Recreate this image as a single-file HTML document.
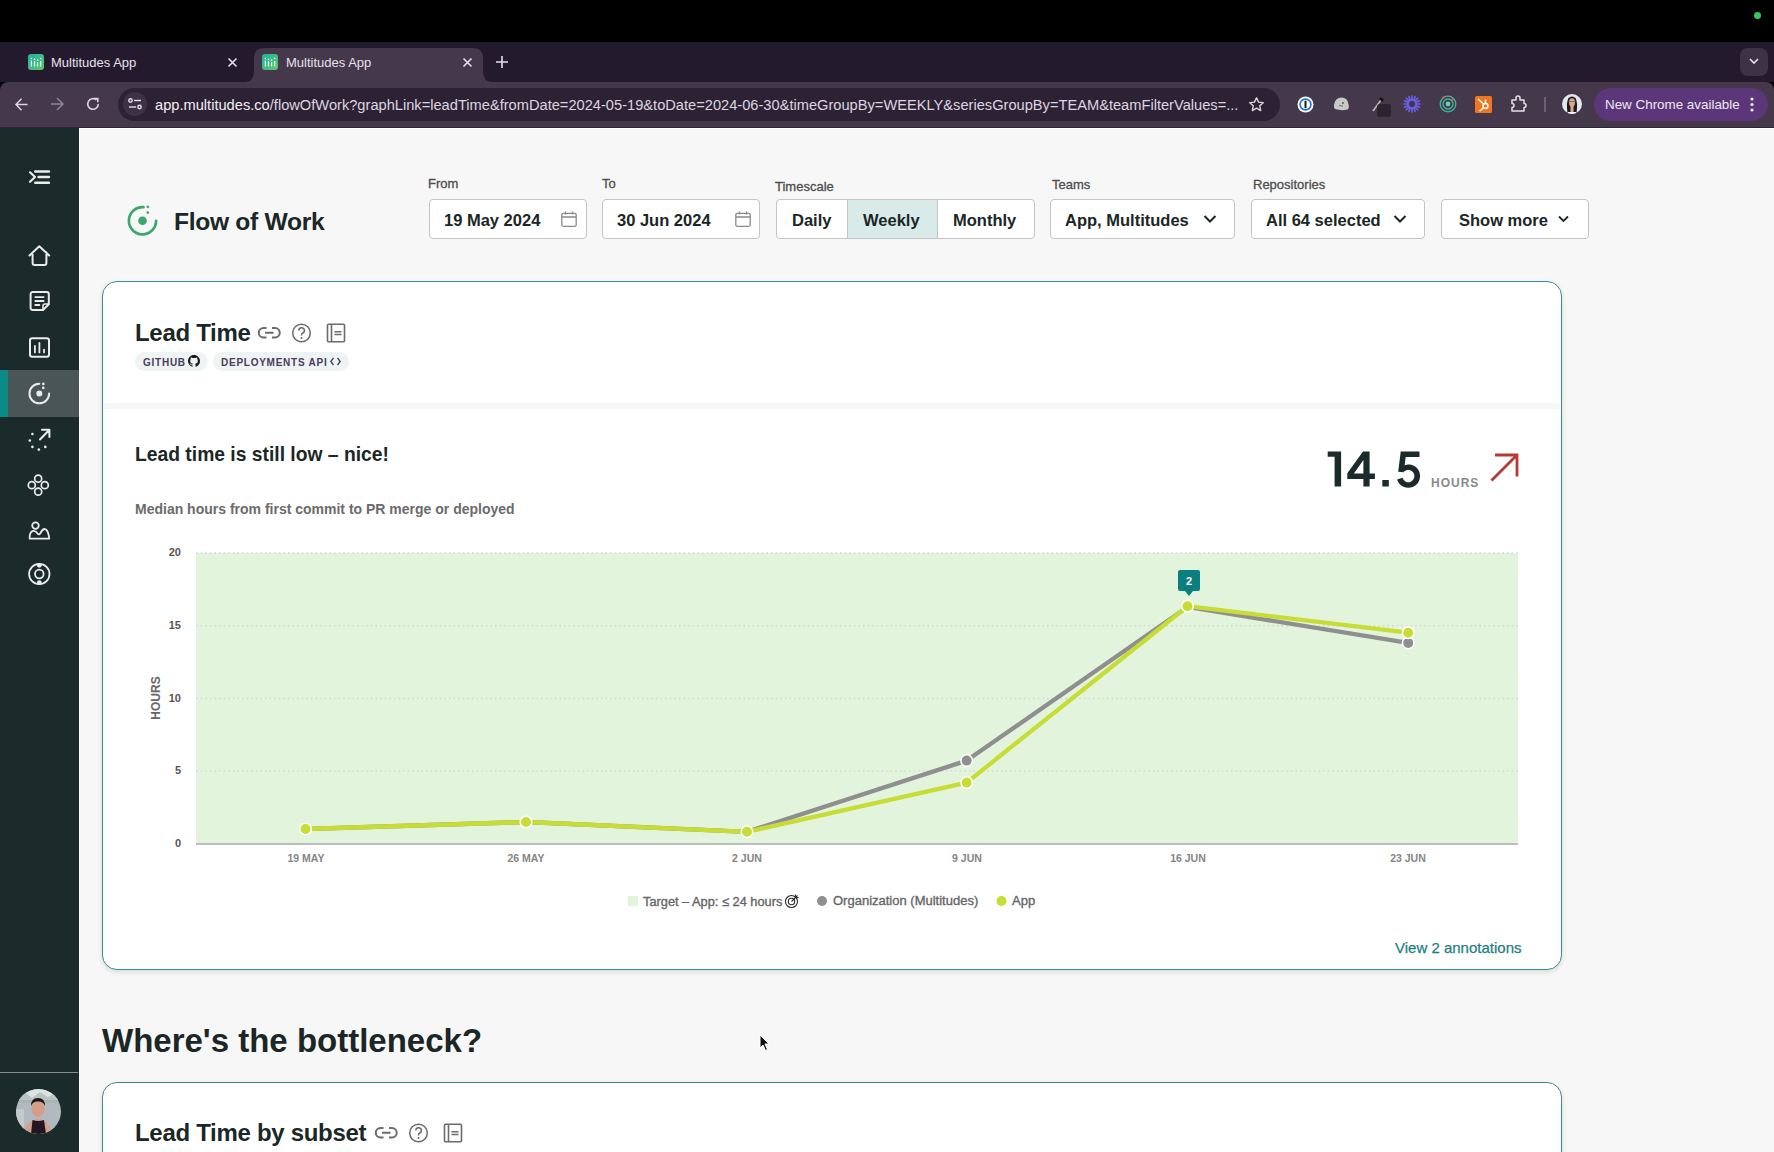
<!DOCTYPE html>
<html><head><meta charset="utf-8">
<style>
*{margin:0;padding:0;box-sizing:border-box}
html,body{width:1774px;height:1152px;overflow:hidden;background:#000;font-family:"Liberation Sans",sans-serif;position:relative}
.a{position:absolute;white-space:nowrap}
svg{position:absolute;overflow:visible}
.tabt{font-size:13px;color:#e8e0ea;top:55px}
.lbl{font-size:13px;color:#4d4d4d;-webkit-text-stroke:0.3px #4d4d4d}
.box{position:absolute;top:199px;height:40px;background:#fff;border:1px solid #c4c4c4;border-radius:4px}
.bt{font-size:16.5px;font-weight:bold;color:#1b2626;top:211px}
.pill{position:absolute;top:352px;height:19px;border-radius:10px;background:#eef3f3}
.pt{font-size:10px;font-weight:bold;letter-spacing:0.75px;color:#4a3a5e;top:357px}
.ylab{font-size:11px;font-weight:bold;color:#555;text-align:right;width:30px;left:151px}
.xlab{font-size:10.5px;font-weight:bold;color:#858585;text-align:center;width:80px;top:852px}
.leg{font-size:13px;color:#666;top:893px;-webkit-text-stroke:0.35px #666}
</style></head><body>
<!-- top black bar dot -->
<div class="a" style="left:1754px;top:12px;width:7px;height:7px;border-radius:50%;background:#34c759"></div>
<!-- tab strip -->
<div class="a" style="left:0;top:42px;width:1774px;height:40px;background:#231b2d"></div>
<!-- active tab -->
<svg style="left:244px;top:48px" width="250" height="34" viewBox="0 0 250 34">
  <path d="M0 34 Q10 34 10 24 L10 10 Q10 0 20 0 L229 0 Q239 0 239 10 L239 24 Q239 34 249 34 Z" fill="#44384a"/>
</svg>
<!-- toolbar -->
<div class="a" style="left:0;top:82px;width:1774px;height:46px;background:#44384a;border-radius:8px 8px 0 0"></div>
<!-- favicons -->
<svg style="left:28px;top:54px" width="16" height="16" viewBox="0 0 16 16"><defs><linearGradient id="fg" x1="0" y1="0" x2="1" y2="1"><stop offset="0" stop-color="#20b39e"/><stop offset="1" stop-color="#62c46c"/></linearGradient></defs><rect width="16" height="16" rx="3" fill="url(#fg)"/><g stroke="#eafff6" stroke-width="1.2"><path d="M3.4 6.6V12.6M6.5 7.3V12.6M9.6 8V12.6M12.7 7V12.6"/></g><g fill="#eafff6"><circle cx="3.4" cy="4.6" r="0.75"/><circle cx="6.5" cy="5.3" r="0.75"/><circle cx="9.6" cy="6" r="0.75"/><circle cx="12.7" cy="4.6" r="0.75"/></g></svg>
<svg style="left:262px;top:54px" width="16" height="16" viewBox="0 0 16 16"><defs><linearGradient id="fg" x1="0" y1="0" x2="1" y2="1"><stop offset="0" stop-color="#20b39e"/><stop offset="1" stop-color="#62c46c"/></linearGradient></defs><rect width="16" height="16" rx="3" fill="url(#fg)"/><g stroke="#eafff6" stroke-width="1.2"><path d="M3.4 6.6V12.6M6.5 7.3V12.6M9.6 8V12.6M12.7 7V12.6"/></g><g fill="#eafff6"><circle cx="3.4" cy="4.6" r="0.75"/><circle cx="6.5" cy="5.3" r="0.75"/><circle cx="9.6" cy="6" r="0.75"/><circle cx="12.7" cy="4.6" r="0.75"/></g></svg>
<div class="a tabt" style="left:51px">Multitudes App</div>
<div class="a tabt" style="left:286px">Multitudes App</div>
<svg style="left:228px;top:58px" width="9" height="9" viewBox="0 0 9 9"><path d="M0.5 0.5L8.5 8.5M8.5 0.5L0.5 8.5" stroke="#e8e0ea" stroke-width="1.6"/></svg>
<svg style="left:463px;top:58px" width="9" height="9" viewBox="0 0 9 9"><path d="M0.5 0.5L8.5 8.5M8.5 0.5L0.5 8.5" stroke="#e8e0ea" stroke-width="1.6"/></svg>
<svg style="left:496px;top:56px" width="12" height="12" viewBox="0 0 12 12"><path d="M6 0V12M0 6H12" stroke="#e8e0ea" stroke-width="1.6"/></svg>
<!-- tab dropdown -->
<div class="a" style="left:1740px;top:48px;width:28px;height:28px;border-radius:8px;background:#3e3246"></div>
<svg style="left:1749px;top:58px" width="10" height="7" viewBox="0 0 10 7"><path d="M1 1L5 5L9 1" stroke="#e8e0ea" stroke-width="1.6" fill="none"/></svg>
<!-- nav buttons -->
<svg style="left:15px;top:98px" width="13" height="13" viewBox="0 0 13 13"><path d="M12.5 6.5H1.2M6.5 0.8L1 6.5L6.5 12.2" stroke="#ddd3e0" stroke-width="1.5" fill="none"/></svg>
<svg style="left:50px;top:97px" width="14" height="14" viewBox="0 0 14 14"><path d="M1 7H12.5M7 1L13 7L7 13" stroke="#8f8494" stroke-width="1.5" fill="none"/></svg>
<svg style="left:86px;top:97px" width="14" height="14" viewBox="0 0 14 14"><path d="M12.3 7A5.3 5.3 0 1 1 10.5 3" stroke="#ddd3e0" stroke-width="1.6" fill="none"/><path d="M8 1.5H11.8V5.3" stroke="#ddd3e0" stroke-width="1.6" fill="none"/></svg>
<!-- omnibox -->
<div class="a" style="left:118px;top:88px;width:1162px;height:33px;border-radius:17px;background:#2c2233"></div>
<div class="a" style="left:123px;top:92px;width:24px;height:24px;border-radius:50%;background:#3d3245"></div>
<svg style="left:128px;top:98px" width="14" height="12" viewBox="0 0 14 12"><g stroke="#e6dfe9" stroke-width="1.4" fill="none"><circle cx="2.5" cy="2.5" r="1.7"/><path d="M6 2.5H13"/><circle cx="11.5" cy="9" r="1.7"/><path d="M1 9H8"/></g></svg>
<div class="a" style="left:155px;top:97px;font-size:14.65px;color:#ddd5e0"><span style="color:#f4eef6">app.multitudes.co</span>/flowOfWork?graphLink=leadTime&amp;fromDate=2024-05-19&amp;toDate=2024-06-30&amp;timeGroupBy=WEEKLY&amp;seriesGroupBy=TEAM&amp;teamFilterValues=...</div>
<!-- star -->
<svg style="left:1248px;top:96px" width="17" height="17" viewBox="0 0 24 24"><path d="M12 2.5l2.9 6.1 6.6.8-4.9 4.5 1.3 6.6L12 17.2l-5.9 3.3 1.3-6.6L2.5 9.4l6.6-.8z" stroke="#ddd3e0" stroke-width="2" fill="none" stroke-linejoin="round"/></svg>
<!-- extension icons -->
<svg style="left:1297px;top:96px" width="17" height="17" viewBox="0 0 17 17"><circle cx="8.5" cy="8.5" r="8" fill="#fff"/><circle cx="8.5" cy="8.5" r="6.2" fill="#1a6fd8"/><circle cx="8.5" cy="8.5" r="4.6" fill="#fff"/><rect x="7.5" y="4.8" width="2" height="7.4" rx="0.6" fill="#1b1b1b"/></svg>
<svg style="left:1333px;top:96px" width="17" height="16" viewBox="0 0 17 16"><path d="M2 13Q0.5 12 1.2 8Q2.5 1.5 8.5 1.5Q14.5 1.5 15.5 8Q16.5 12.5 14.5 13.5Q8 15 2 13Z" fill="#c8c8c8"/><circle cx="10" cy="7" r="0.9" fill="#555"/><path d="M6 9.5L10 10.2" stroke="#555" stroke-width="0.8"/></svg>
<svg style="left:1372px;top:96px" width="22" height="22" viewBox="0 0 22 22"><path d="M1 15L9 4" stroke="#bbb" stroke-width="1.6"/><path d="M8 2L11 5" stroke="#111" stroke-width="2.5"/><rect x="5" y="8" width="14" height="13" rx="3" fill="#2a2330"/></svg>
<svg style="left:1403px;top:95px" width="18" height="18" viewBox="0 0 18 18"><g stroke="#6c5fe6" stroke-width="1.7" stroke-linecap="round"><path d="M9 1V5M9 13V17M1 9H5M13 9H17M3.3 3.3L6.2 6.2M11.8 11.8L14.7 14.7M14.7 3.3L11.8 6.2M6.2 11.8L3.3 14.7M5.9 1.6L7.4 5.4M10.6 12.6L12.1 16.4M12.1 1.6L10.6 5.4M7.4 12.6L5.9 16.4M1.6 5.9L5.4 7.4M12.6 10.6L16.4 12.1M1.6 12.1L5.4 10.6M12.6 7.4L16.4 5.9"/></g><circle cx="9" cy="9" r="4.2" fill="none" stroke="#6c5fe6" stroke-width="2"/></svg>
<svg style="left:1439px;top:95px" width="18" height="18" viewBox="0 0 18 18"><circle cx="9" cy="9" r="7.8" stroke="#3fb6a0" stroke-width="1.3" fill="none"/><circle cx="9" cy="9" r="5" stroke="#3fb6a0" stroke-width="1.3" fill="none"/><circle cx="9" cy="9" r="2.4" fill="#58d8b0"/><circle cx="4.5" cy="2.5" r="1.2" fill="#e0573a"/><circle cx="13.5" cy="4.5" r="1.2" fill="#e0573a"/></svg>
<svg style="left:1475px;top:96px" width="17" height="17" viewBox="0 0 17 17"><rect width="17" height="17" rx="1.5" fill="#f0761f"/><g stroke="#fff" stroke-width="1.5" fill="none"><circle cx="10.5" cy="10" r="2.5"/><path d="M3 3L8.5 8M10.5 7.5V3.5M8.5 12L4.5 15"/></g></svg>
<svg style="left:1510px;top:95px" width="18" height="18" viewBox="0 0 18 18"><path d="M2 5H6V3A2 2 0 0 1 10 3V5H14V8.5A2 2 0 0 1 14 12.5V16H2V12.5A2 2 0 0 0 2 8.5Z" stroke="#e6dfe9" stroke-width="1.5" fill="none" stroke-linejoin="round"/></svg>
<div class="a" style="left:1544px;top:97px;width:1.5px;height:15px;background:#6b5f70"></div>
<svg style="left:1562px;top:94px" width="20" height="20" viewBox="0 0 20 20"><defs><clipPath id="av1"><circle cx="10" cy="10" r="10"/></clipPath></defs><g clip-path="url(#av1)"><rect width="20" height="20" fill="#e3e8ec"/><path d="M5.5 19Q4 8 6.5 4Q10 1 13.5 4Q16 8 14.5 19Z" fill="#1c1a1c"/><ellipse cx="10" cy="8.5" rx="3" ry="4.2" fill="#dba88c"/><rect x="8.5" y="12" width="3" height="6" fill="#dba88c"/><path d="M6.5 7.5H13.5" stroke="#5a6a90" stroke-width="0.9"/><rect x="6" y="18" width="8" height="3" fill="#f4f4f4"/></g></svg>
<!-- new chrome pill -->
<div class="a" style="left:1594px;top:88px;width:174px;height:33px;border-radius:17px;background:#5b3678"></div>
<div class="a" style="left:1605px;top:97px;font-size:13.4px;color:#f0e8f4">New Chrome available</div>
<svg style="left:1750px;top:97px" width="4" height="15" viewBox="0 0 4 15"><g fill="#f0e8f4"><circle cx="2" cy="2" r="1.6"/><circle cx="2" cy="7.5" r="1.6"/><circle cx="2" cy="13" r="1.6"/></g></svg>

<div class="a" style="left:0;top:127px;width:1774px;height:1px;background:#2f2336"></div>
<!-- page -->
<div class="a" style="left:0;top:128px;width:1774px;height:1024px;background:#f7f7f7"></div>
<!-- sidebar -->
<div class="a" style="left:0;top:128px;width:79px;height:1024px;background:#1b2a2a"></div>
<div class="a" style="left:79px;top:128px;width:1px;height:1024px;background:#fff"></div>
<div class="a" style="left:79px;top:128px;width:1695px;height:1px;background:#fff"></div>
<div class="a" style="left:0;top:370px;width:79px;height:47px;background:#4a5558"></div>
<div class="a" style="left:0;top:370px;width:8px;height:47px;background:#0b8a88"></div>
<div class="a" style="left:0;top:1072px;width:78px;height:1.2px;background:#8c8c8c"></div>
<svg style="left:16px;top:1089px" width="45" height="45" viewBox="0 0 45 45"><defs><clipPath id="av2"><circle cx="22.5" cy="22.5" r="22.5"/></clipPath></defs><g clip-path="url(#av2)"><rect width="45" height="45" fill="#b3b9c0"/><rect width="45" height="11" fill="#dfe3e6"/><path d="M4 8L10 4L16 9L24 3L32 8L40 4L45 9V14H0Z" fill="#9fb0a8" opacity=".6"/><path d="M0 20H8V40H0Z" fill="#c6c9cc"/><ellipse cx="22" cy="20" rx="6.5" ry="8" fill="#d69e86"/><path d="M15 17Q15 9 22 9Q29 9 29 17Q27 12 22 12.5Q17 12 15 17Z" fill="#1f1518"/><path d="M9 45Q10 31 22 30Q34 31 36 45Z" fill="#d4a08d"/><path d="M15 45L16.5 31Q22 33 28 31L30 45Z" fill="#241522"/></g></svg>
<svg style="left:0;top:128px" width="78" height="480" viewBox="0 128 78 480">
 <g stroke="#ebebeb" stroke-width="2.2" fill="none" stroke-linecap="round" stroke-linejoin="round">
  <path d="M30 172.3L35 177L30 181.8"/>
  <path d="M35.2 171.5H49M38.5 177H49M35.2 182.7H49" stroke-width="2.4"/>
  <!-- home -->
  <path d="M29.5 255.5L39.3 246.3L49.2 255.5M32.6 252.5V263A2 2 0 0 0 34.6 265H44.4A2 2 0 0 0 46.4 263V252.5" stroke-width="2"/>
  <!-- notes -->
  <path d="M43 310H32.6A2 2 0 0 1 30.6 308V294A2 2 0 0 1 32.6 292H46.8A2 2 0 0 1 48.8 294V304.2L43 310Z" stroke-width="2"/>
  <path d="M43 310V306A2 2 0 0 1 45 304H48.8" stroke-width="1.6"/>
  <path d="M35.3 297.1H43.6M35.3 301H43.6M35.3 305H39.4" stroke-width="1.8"/>
  <!-- chart -->
  <rect x="30" y="338.2" width="19" height="18.5" rx="2.2" stroke-width="2"/>
  <path d="M34.9 346V352.4M39.4 343V352.4M44 349.6V352.4" stroke-width="1.8"/>
  <!-- flow -->
  <path d="M39.3 383.7A9.8 9.8 0 1 0 49.1 393.5" stroke-width="2"/>
 </g>
 <g fill="#ebebeb">
  <circle cx="43.3" cy="383.9" r="1.3"/><circle cx="43.3" cy="387.9" r="1.3"/><circle cx="39.3" cy="393.5" r="3"/>
  <circle cx="32.4" cy="434" r="1.3"/><circle cx="29.8" cy="440.5" r="1.3"/><circle cx="32.4" cy="446.9" r="1.3"/><circle cx="38.8" cy="449.6" r="1.3"/><circle cx="45.3" cy="446.9" r="1.3"/>
  <circle cx="39.3" cy="565.3" r="2.4"/><circle cx="39.3" cy="582.6" r="2.4"/>
 </g>
 <g stroke="#ebebeb" stroke-width="2" fill="none" stroke-linecap="round" stroke-linejoin="round">
  <path d="M40 439.5L49 430.2M42 429.8H49.4V437"/>
  <g stroke-width="1.7"><circle cx="38.2" cy="478.7" r="3.5"/><circle cx="31.8" cy="485.2" r="3.5"/><circle cx="44.8" cy="485.2" r="3.5"/><circle cx="38.2" cy="491.7" r="3.5"/></g>
  <circle cx="35.5" cy="525.6" r="3.3" stroke-width="1.8"/>
  <path d="M29.6 538.6Q29.6 531.5 33 531Q35.6 530.6 37.6 533.6Q39 535.6 40.5 533Q42.5 529 44.5 529Q48 529 49.3 538.6Z" stroke-width="1.8"/>
  <circle cx="39.3" cy="574" r="10.2" stroke-width="1.8"/>
  <circle cx="39.3" cy="574" r="4.3" stroke-width="1.8"/>
 </g>
</svg>

<!-- header -->
<svg style="left:126px;top:204px" width="34" height="34" viewBox="0 0 34 34">
  <path d="M17.5 3.2A13.6 13.6 0 1 0 30.1 16.8" stroke="#3aa76d" stroke-width="2.7" fill="none" stroke-linecap="round"/>
  <circle cx="21.8" cy="2.8" r="1.35" fill="#3aa76d"/><circle cx="21.8" cy="8.6" r="1.35" fill="#3aa76d"/>
  <circle cx="16.5" cy="16.8" r="4.3" fill="#3aa76d"/>
</svg>
<div class="a" style="left:174px;top:208px;font-size:24.6px;font-weight:bold;color:#1b2626;letter-spacing:-0.3px">Flow of Work</div>

<div class="a lbl" style="left:428px;top:176px">From</div>
<div class="a lbl" style="left:602px;top:176px">To</div>
<div class="a lbl" style="left:775px;top:178.5px">Timescale</div>
<div class="a lbl" style="left:1052px;top:177px">Teams</div>
<div class="a lbl" style="left:1253px;top:177px">Repositories</div>

<div class="box" style="left:429px;width:158px"></div>
<div class="box" style="left:602px;width:158px"></div>
<div class="box" style="left:776px;width:259px;overflow:hidden"><div class="a" style="left:70px;top:0;width:91px;height:38px;background:#d9ebe9;border-left:1px solid #c4c4c4;border-right:1px solid #c4c4c4"></div></div>
<div class="box" style="left:1050px;width:185px"></div>
<div class="box" style="left:1251px;width:174px"></div>
<div class="box" style="left:1441px;width:148px"></div>

<div class="a bt" style="left:444px">19 May 2024</div>
<div class="a bt" style="left:617px">30 Jun 2024</div>
<div class="a bt" style="left:792px">Daily</div>
<div class="a bt" style="left:863px">Weekly</div>
<div class="a bt" style="left:953px">Monthly</div>
<div class="a bt" style="left:1065px">App, Multitudes</div>
<div class="a bt" style="left:1266px">All 64 selected</div>
<div class="a bt" style="left:1459px">Show more</div>
<svg style="left:561px;top:211px" width="16" height="16" viewBox="0 0 16 16"><g stroke="#8a8a8a" stroke-width="1.3" fill="none"><rect x="0.8" y="2.3" width="14.4" height="13" rx="1.5"/><path d="M0.8 6H15.2M4.5 0.5V3.5M11.5 0.5V3.5"/></g></svg>
<svg style="left:735px;top:211px" width="16" height="16" viewBox="0 0 16 16"><g stroke="#8a8a8a" stroke-width="1.3" fill="none"><rect x="0.8" y="2.3" width="14.4" height="13" rx="1.5"/><path d="M0.8 6H15.2M4.5 0.5V3.5M11.5 0.5V3.5"/></g></svg>
<svg style="left:1203px;top:214px" width="14" height="10" viewBox="0 0 14 10"><path d="M1.5 2L7 7.5L12.5 2" stroke="#1b2626" stroke-width="2" fill="none"/></svg>
<svg style="left:1393px;top:214px" width="14" height="10" viewBox="0 0 14 10"><path d="M1.5 2L7 7.5L12.5 2" stroke="#1b2626" stroke-width="2" fill="none"/></svg>
<svg style="left:1558px;top:215px" width="11" height="8" viewBox="0 0 11 8"><path d="M1 1.5L5.5 6L10 1.5" stroke="#1b2626" stroke-width="1.8" fill="none"/></svg>

<!-- card 1 -->
<div class="a" style="left:102px;top:281px;width:1459.5px;height:689px;background:#fff;border:1.5px solid #3f8b8d;border-radius:15px;box-shadow:0 2px 5px rgba(0,0,0,.12)"></div>
<div class="a" style="left:104px;top:403px;width:1456px;height:6px;background:#f5f6f6"></div>
<div class="a" style="left:135px;top:319px;font-size:24px;font-weight:bold;color:#1b2626;letter-spacing:-0.3px">Lead Time</div>
<svg style="left:258px;top:327px" width="23" height="12" viewBox="0 0 23 12"><g stroke="#6b6b6b" stroke-width="2" fill="none"><path d="M8.5 1H5.5A4.5 4.5 0 0 0 5.5 10.5H8.5M14 1H17A4.5 4.5 0 0 1 17 10.5H14M7 5.8H15.5"/></g></svg>
<svg style="left:292px;top:323px" width="20" height="20" viewBox="0 0 20 20"><circle cx="9.5" cy="10" r="8.8" stroke="#6b6b6b" stroke-width="1.5" fill="none"/><path d="M6.8 7.5A2.8 2.8 0 1 1 10.5 10.2Q9.5 10.7 9.5 12V12.5" stroke="#6b6b6b" stroke-width="1.5" fill="none"/><circle cx="9.5" cy="15" r="1" fill="#6b6b6b"/></svg>
<svg style="left:326px;top:323px" width="20" height="20" viewBox="0 0 20 20"><g stroke="#6b6b6b" stroke-width="1.6" fill="none"><rect x="1.5" y="1.3" width="17" height="17.4" rx="1"/><path d="M5.5 1.3V18.7M8.5 8.7H15.5M8.5 11.5H15.5"/></g></svg>
<div class="pill" style="left:135px;width:73px"></div>
<div class="pill" style="left:213px;width:136px"></div>
<div class="a pt" style="left:143px">GITHUB</div>
<div class="a pt" style="left:221px">DEPLOYMENTS API</div>
<svg style="left:188px;top:355px" width="12" height="12" viewBox="0 0 16 16"><path fill="#1b1b1b" d="M8 0C3.58 0 0 3.58 0 8c0 3.54 2.29 6.53 5.47 7.59.4.07.55-.17.55-.38 0-.19-.01-.82-.01-1.49-2.01.37-2.53-.49-2.69-.94-.09-.23-.48-.94-.82-1.13-.28-.15-.68-.52-.01-.53.63-.01 1.08.58 1.23.82.72 1.21 1.87.87 2.33.66.07-.52.28-.87.51-1.07-1.78-.2-3.64-.89-3.64-3.95 0-.87.31-1.59.82-2.15-.08-.2-.36-1.02.08-2.12 0 0 .67-.21 2.2.82.64-.18 1.32-.27 2-.27.68 0 1.36.09 2 .27 1.53-1.04 2.2-.82 2.2-.82.44 1.1.16 1.92.08 2.12.51.56.82 1.27.82 2.15 0 3.07-1.87 3.75-3.65 3.95.29.25.54.73.54 1.48 0 1.07-.01 1.93-.01 2.2 0 .21.15.46.55.38A8.013 8.013 0 0016 8c0-4.42-3.58-8-8-8z"/></svg>
<svg style="left:330px;top:357px" width="11" height="9" viewBox="0 0 11 9"><path d="M3.5 1L0.8 4.5L3.5 8M7.5 1L10.2 4.5L7.5 8" stroke="#4a3a5e" stroke-width="1.3" fill="none"/></svg>

<div class="a" style="left:135px;top:444px;font-size:19.3px;font-weight:bold;color:#1b2626">Lead time is still low – nice!</div>
<div class="a" style="left:135px;top:500.5px;font-size:14px;font-weight:bold;color:#6b6b6b">Median hours from first commit to PR merge or deployed</div>
<svg style="left:0;top:0" width="1774" height="1152" viewBox="0 0 1774 1152"><g fill="#1b2a2a">
<path d="M1327.7 451.5H1341.1V486.5H1334.6V456.8H1327.7Z"/>
<path fill-rule="evenodd" d="M1363 451.5H1369.6V473.4H1374.9V478.9H1369.6V486.5H1363.4V478.9H1347.3V473.2ZM1353.9 473.4H1363.4V460Z"/>
<rect x="1382.3" y="480" width="6.5" height="6.5"/>
</g><g stroke="#1b2a2a" stroke-width="5.6" fill="none">
<path d="M1419.5 454.2H1403.2L1401 472"/>
<path d="M1402.6 469.3A8.9 8.9 0 1 1 1399.8 478.6"/>
</g></svg>
<div class="a" style="left:1431px;top:476px;font-size:12px;font-weight:bold;color:#8a8a8a;letter-spacing:1px">HOURS</div>
<svg style="left:1488px;top:452px" width="32" height="32" viewBox="0 0 32 32"><path d="M3.5 28.5L29 3M7 3H29V24.6" stroke="#b83a32" stroke-width="2.8" fill="none"/></svg>

<!-- chart -->
<svg style="left:0;top:0" width="1774" height="1152" viewBox="0 0 1774 1152">
  <rect x="196" y="553" width="1322" height="291" fill="#e3f4dc"/>
  <g stroke="#d6d6d6" stroke-width="1.5" stroke-dasharray="1.6 3">
    <path d="M196 553H1518M196 625.7H1518M196 698.4H1518M196 771H1518"/>
  </g>
  <path d="M196 844H1518" stroke="#bdbdbd" stroke-width="2"/>
  <g stroke-linejoin="round" stroke-linecap="round" fill="none" stroke-width="4.3">
    <path d="M305.5 829L526 822L747 831.8L966.7 760.6L1187.5 607L1408.2 642.9" stroke="#8f8f8f"/>
    <path d="M305.5 829L526 822L747 831.8L966.7 782.6L1187.5 606.2L1408.2 632.7" stroke="#c7dc35"/>
  </g>
  <g stroke="#fff" stroke-width="1.6">
    <circle cx="966.7" cy="760.6" r="5.8" fill="#8f8f8f"/>
    <circle cx="1408.2" cy="642.9" r="5.8" fill="#8f8f8f"/>
    <circle cx="305.5" cy="829" r="5.8" fill="#c7dc35"/>
    <circle cx="526" cy="822" r="5.8" fill="#c7dc35"/>
    <circle cx="747" cy="831.8" r="5.8" fill="#c7dc35"/>
    <circle cx="966.7" cy="782.6" r="5.8" fill="#c7dc35"/>
    <circle cx="1187.5" cy="606.2" r="5.8" fill="#c7dc35"/>
    <circle cx="1408.2" cy="632.7" r="5.8" fill="#c7dc35"/>
  </g>
  <path d="M1180 570H1198Q1200 570 1200 572V589Q1200 591 1198 591H1193L1189 596L1185 591H1180Q1178 591 1178 589V572Q1178 570 1180 570Z" fill="#0b7f7f"/>
  <text x="1189" y="585" font-family="Liberation Sans" font-size="11" font-weight="bold" fill="#fff" text-anchor="middle">2</text>
  <text transform="translate(160,698) rotate(-90)" font-family="Liberation Sans" font-size="12" font-weight="bold" fill="#666" text-anchor="middle">HOURS</text>
  <rect x="628" y="896" width="10" height="10" fill="#e3f4dc"/>
  <circle cx="822" cy="901" r="5" fill="#8f8f8f"/>
  <circle cx="1001.5" cy="901" r="5" fill="#c7dc35"/>
  <g stroke="#2a2a2a" stroke-width="1.1" fill="none"><circle cx="791.5" cy="901.5" r="6"/><circle cx="791.5" cy="901.5" r="3.2"/><path d="M791.5 901.5L797.5 895.5M795.5 894.5V897.5H798.5"/></g>
</svg>
<div class="a ylab" style="top:546px">20</div>
<div class="a ylab" style="top:619px">15</div>
<div class="a ylab" style="top:692px">10</div>
<div class="a ylab" style="top:764px">5</div>
<div class="a ylab" style="top:837px">0</div>
<div class="a xlab" style="left:266px">19 MAY</div>
<div class="a xlab" style="left:486px">26 MAY</div>
<div class="a xlab" style="left:707px">2 JUN</div>
<div class="a xlab" style="left:927px">9 JUN</div>
<div class="a xlab" style="left:1148px">16 JUN</div>
<div class="a xlab" style="left:1368px">23 JUN</div>
<div class="a leg" style="left:643px;font-size:12.8px;top:893.5px">Target – App: ≤ 24 hours</div>
<div class="a leg" style="left:833px">Organization (Multitudes)</div>
<div class="a leg" style="left:1012px">App</div>

<div class="a" style="left:1395px;top:939px;font-size:15px;color:#1f7f80;-webkit-text-stroke:0.25px #1f7f80">View 2 annotations</div>

<!-- section 2 -->
<div class="a" style="left:102px;top:1021.5px;font-size:33px;font-weight:bold;color:#1b2626">Where's the bottleneck?</div>
<div class="a" style="left:102px;top:1082px;width:1459.5px;height:200px;background:#fff;border:1.5px solid #3f8b8d;border-radius:15px;box-shadow:0 2px 5px rgba(0,0,0,.12)"></div>
<div class="a" style="left:135px;top:1119px;font-size:24px;font-weight:bold;color:#1b2626;letter-spacing:-0.3px">Lead Time by subset</div>
<svg style="left:375px;top:1127px" width="23" height="12" viewBox="0 0 23 12"><g stroke="#6b6b6b" stroke-width="2" fill="none"><path d="M8.5 1H5.5A4.5 4.5 0 0 0 5.5 10.5H8.5M14 1H17A4.5 4.5 0 0 1 17 10.5H14M7 5.8H15.5"/></g></svg>
<svg style="left:409px;top:1123px" width="20" height="20" viewBox="0 0 20 20"><circle cx="9.5" cy="10" r="8.8" stroke="#6b6b6b" stroke-width="1.5" fill="none"/><path d="M6.8 7.5A2.8 2.8 0 1 1 10.5 10.2Q9.5 10.7 9.5 12V12.5" stroke="#6b6b6b" stroke-width="1.5" fill="none"/><circle cx="9.5" cy="15" r="1" fill="#6b6b6b"/></svg>
<svg style="left:443px;top:1123px" width="20" height="20" viewBox="0 0 20 20"><g stroke="#6b6b6b" stroke-width="1.6" fill="none"><rect x="1.5" y="1.3" width="17" height="17.4" rx="1"/><path d="M5.5 1.3V18.7M8.5 8.7H15.5M8.5 11.5H15.5"/></g></svg>

<!-- cursor -->
<svg style="left:759px;top:1034px" width="12" height="18" viewBox="0 0 12 18"><path d="M1 1V14L4 11L6.5 16.5L8.5 15.5L6 10H10Z" fill="#111" stroke="#fff" stroke-width="1"/></svg>
</body></html>
